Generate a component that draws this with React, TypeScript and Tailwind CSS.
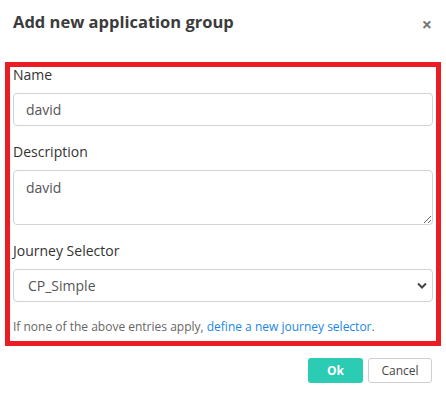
import { useState } from "react";

export default function App() {
  const [name, setName] = useState<string>("david");
  const [description, setDescription] = useState<string>("david");
  const [journey, setJourney] = useState<string>("CP_Simple");

  return (
    <div className="w-[446px] h-[396px] bg-white text-[#333] [font-family:'Open_Sans',sans-serif]">
      {/* Header */}
      <div className="flex items-center justify-between h-[44px] pl-[13px] pr-[14px]">
        <h1 className="text-[16.5px] font-bold text-[#3b3b3b]">Add new application group</h1>
        <button className="text-[#777] text-[18px] font-bold leading-none mt-[4px]">×</button>
      </div>

      {/* Body */}
      <div className="mx-[5px] mt-[18px] border-[5px] border-[#ec1c24] px-[3px] pt-0 pb-[5px]">
        <label className="block text-[14px] leading-[16px] mb-[10px]">Name</label>
        <input
          value={name}
          onChange={(e) => setName(e.target.value)}
          className="w-full h-[33px] px-[12px] border border-[#cfd4d9] rounded-[4px] text-[14px] text-[#555] outline-none"
        />

        <label className="block text-[14px] leading-[16px] mt-[18px] mb-[10px]">Description</label>
        <textarea
          value={description}
          onChange={(e) => setDescription(e.target.value)}
          className="block w-full h-[55px] px-[12px] py-[6px] border border-[#cfd4d9] rounded-[4px] text-[14px] text-[#555] outline-none"
        />

        <label className="block text-[14px] leading-[16px] mt-[18px] mb-[10px]">Journey Selector</label>
        <div className="relative">
          <select
            value={journey}
            onChange={(e) => setJourney(e.target.value)}
            className="appearance-none w-full h-[33px] px-[14px] border border-[#cfd4d9] rounded-[4px] text-[14px] text-[#555] bg-white outline-none"
          >
            <option>CP_Simple</option>
          </select>
          <svg className="absolute right-[6px] top-[13px] pointer-events-none" width="10" height="7" viewBox="0 0 10 7">
            <path d="M1 1.5 L5 5.5 L9 1.5" fill="none" stroke="#444" strokeWidth="2" />
          </svg>
        </div>

        <p className="text-[12px] text-[#666] mt-[16px] leading-[18px]">
          If none of the above entries apply, <a className="text-[#1a87e6]">define a new journey selector.</a>
        </p>
      </div>

      {/* Footer */}
      <div className="flex justify-end gap-[5px] pr-[14px] mt-[12px]">
        <button className="w-[55px] h-[25px] rounded-[3px] bg-[#2ccbb3] text-white text-[12px] font-bold">Ok</button>
        <button className="w-[64px] h-[25px] rounded-[3px] border border-[#cfcfcf] bg-white text-[#444] text-[12px]">Cancel</button>
      </div>
    </div>
  );
}
